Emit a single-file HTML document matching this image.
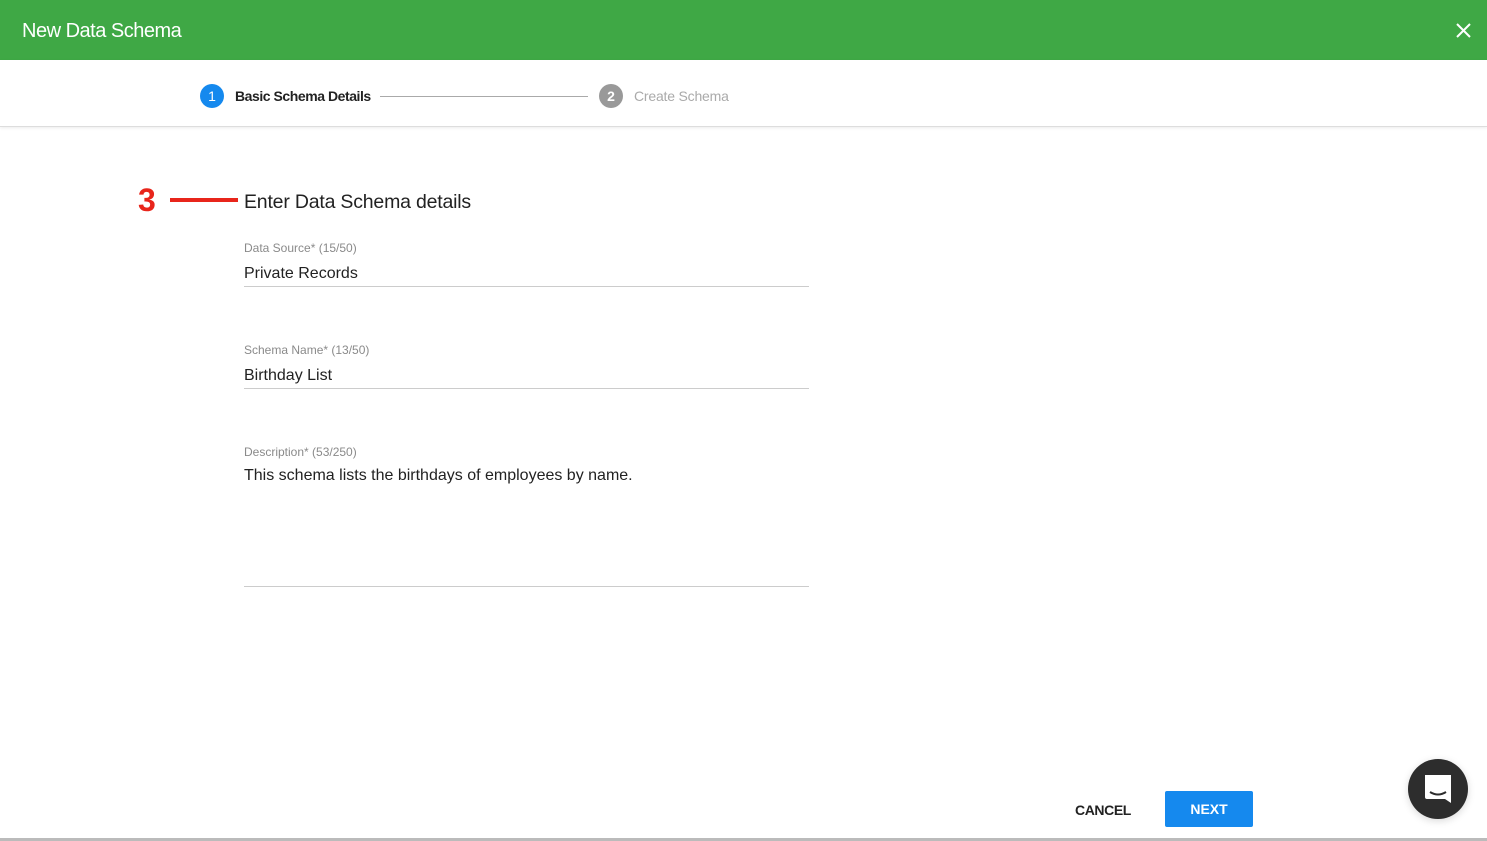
<!DOCTYPE html>
<html><head><meta charset="utf-8"><style>
body{margin:0;width:1487px;height:841px;position:relative;background:#fff;font-family:"Liberation Sans",sans-serif;overflow:hidden}
.hdr{position:absolute;left:0;top:0;width:1487px;height:60px;background:#3fa845}
.hdr .t{position:absolute;left:22px;top:20px;color:#fff;font-size:20px;letter-spacing:-0.5px}
.step{position:absolute;left:0;top:60px;width:1487px;height:66px;border-bottom:1px solid #ddd;box-shadow:0 1px 3px rgba(0,0,0,.08)}
.c{position:absolute;width:24px;height:24px;border-radius:50%;color:#fff;font-size:14px;text-align:center;line-height:24px;top:24px}
.a{position:absolute;font-size:14px;top:28px}
.lbl{position:absolute;left:244px;font-size:12px;color:#8a8a8a}
.val{position:absolute;left:244px;font-size:16px;color:#222}
.ln{position:absolute;left:244px;width:565px;height:1px;background:#ccc}
</style></head><body>
<div class="hdr"><div class="t">New Data Schema</div>
<svg style="position:absolute;left:1456px;top:23px" width="15" height="15"><path d="M1 1L14 14M14 1L1 14" stroke="#fff" stroke-width="2"/></svg></div>
<div class="step">
<div class="c" style="left:200px;background:#1589ee">1</div>
<div class="a" style="left:235px;color:#222;font-weight:bold;letter-spacing:-0.45px">Basic Schema Details</div>
<div style="position:absolute;left:380px;top:36px;width:208px;height:1px;background:#aaa"></div>
<div class="c" style="left:599px;background:#999;font-weight:bold">2</div>
<div class="a" style="left:634px;color:#aaa;letter-spacing:-0.2px">Create Schema</div>
</div>
<div style="position:absolute;left:138px;top:182px;color:#e8251b;font-size:32px;font-weight:bold">3</div>
<div style="position:absolute;left:170px;top:198px;width:68px;height:4px;background:#e8251b"></div>
<div style="position:absolute;left:244px;top:191px;font-size:19.5px;color:#222;letter-spacing:-0.2px">Enter Data Schema details</div>
<div class="lbl" style="top:241px">Data Source* (15/50)</div>
<div class="val" style="top:265px">Private Records</div>
<div class="ln" style="top:286px"></div>
<div class="lbl" style="top:343px">Schema Name* (13/50)</div>
<div class="val" style="top:367px">Birthday List</div>
<div class="ln" style="top:388px"></div>
<div class="lbl" style="top:445px">Description* (53/250)</div>
<div class="val" style="top:467px">This schema lists the birthdays of employees by name.</div>
<div class="ln" style="top:586px"></div>
<div style="position:absolute;left:1075px;top:802px;font-size:14px;font-weight:bold;color:#222;letter-spacing:-0.4px">CANCEL</div>
<div style="position:absolute;left:1165px;top:791px;width:88px;height:36px;background:#1589ee;border-radius:2px;color:#fff;font-weight:bold;font-size:14px;text-align:center;line-height:36px">NEXT</div>
<div style="position:absolute;left:1408px;top:759px;width:60px;height:60px;border-radius:50%;background:#2d2d2d;box-shadow:0 2px 8px rgba(0,0,0,.15)">
<svg width="60" height="60"><path d="M17 16h26v28l-6-4H19a2 2 0 0 1-2-2z" fill="#fff"/><path d="M22 33q8 5 16 0" stroke="#2d2d2d" stroke-width="2" fill="none"/></svg></div>
<div style="position:absolute;left:0;top:838px;width:1487px;height:3px;background:#bbb"></div>
</body></html>
